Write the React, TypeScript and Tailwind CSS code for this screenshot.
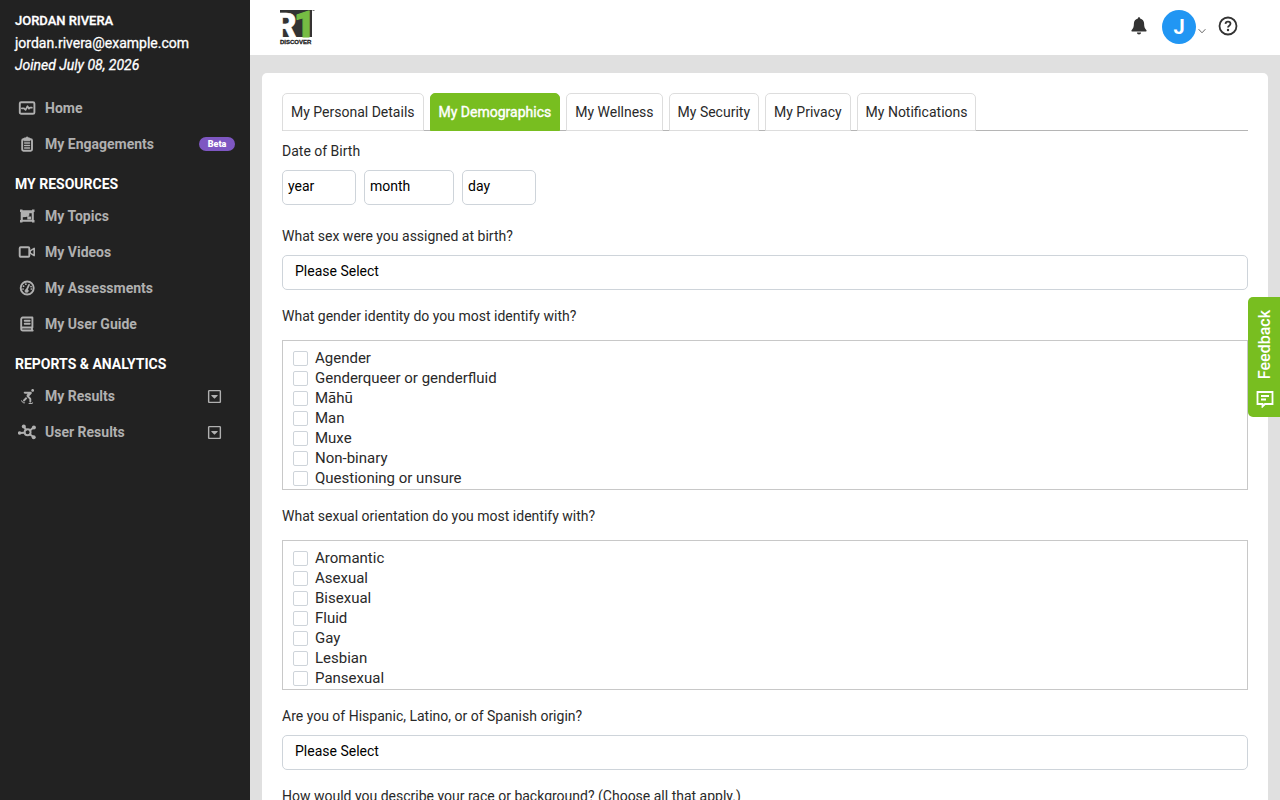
import React from "react";
import type { ReactNode } from "react";
import { FaRegCaretSquareDown, FaSkating } from "react-icons/fa";

type IconProps = { children: ReactNode };

function Icon({ children }: IconProps) {
  return (
    <svg
      viewBox="0 0 18 18"
      className="size-[18px] shrink-0"
      fill="none"
      stroke="currentColor"
      strokeWidth="1.9"
      strokeLinecap="round"
      strokeLinejoin="round"
      aria-hidden="true"
    >
      {children}
    </svg>
  );
}

const icons = {
  home: (
    <Icon>
      <rect x="1.8" y="3.2" width="14.6" height="11.6" rx="1.4" />
      <path d="M3.800 9.300h2.300l1.500 1.500 1.900-3.600 1.500 2.500 1-1h1.900" strokeWidth="1.700" />
    </Icon>
  ),
  clipboard: (
    <Icon>
      <rect x="4.200" y="4.200" width="9.800" height="11.600" rx="1.200" />
      <path d="M6.300 3.100h1.300a1.600 1.600 0 0 1 3 0h1.300v2.700H6.300z" fill="currentColor" strokeWidth="1" />
      <path d="M6.600 8h5M6.600 10.500h5M6.600 13h5" strokeWidth="1.300" />
    </Icon>
  ),
  topics: (
    <Icon>
      <path
        d="M2 2.500h2.500v.7h9.500v-.7h2.500V5h-.7v8h.7v2.500H14v-.7H4.500v.7H2V13h.7V5H2zM11.300 6.200v2.500H8.200v1.200l-3.400.4v2.500h8.900V6.200z"
        fill="currentColor"
        fillRule="evenodd"
        stroke="none"
      />
      <path d="M5.300 5.200h5.200v4.600H5.300zM9.300 9.600h3.800v2.800H9.300z" fill="currentColor" stroke="none" />
    </Icon>
  ),
  video: (
    <Icon>
      <rect x="1.700" y="4.200" width="9.600" height="9.600" rx="1" />
      <path d="M12.200 7.900l4-2.500v7.200l-4-2.500z" strokeWidth="1.600" />
    </Icon>
  ),
  gauge: (
    <Icon>
      <circle cx="9.200" cy="9" r="6.500" />
      <path d="M8.800 10.700l2.200-4.800" strokeWidth="1.800" />
      <circle cx="8.600" cy="11.900" r="1.700" fill="currentColor" strokeWidth=".5" />
      <path d="M7.800 5.200h.1M5.500 7.200h.1M5 10h.1M13 7.600h.1M13.300 10h.1" strokeWidth="1.700" />
    </Icon>
  ),
  book: (
    <Icon>
      <path d="M4.800 2.500h9.600v10H4.700a1.500 1.500 0 0 0 0 3h10M3.200 14V4.300a1.700 1.700 0 0 1 1.600-1.800M14 12.500v3" />
      <path d="M6.700 5.800h5M6.700 8.700h5" />
    </Icon>
  ),
  skater: (
    <span className="flex w-[18px] shrink-0 justify-center">
      <FaSkating className="size-[15px]" aria-hidden="true" />
    </span>
  ),
  network: (
    <Icon>
      <circle cx="9.600" cy="9.300" r="3" />
      <path d="M1.800 10l4.700-.3M6 3.800L8 6.700M15.700 4.200l-3.800 3.200M15.400 14l-3.600-2.700" />
      <circle cx="1.700" cy="10" r="1.800" fill="currentColor" stroke="none" />
      <circle cx="5.800" cy="3.500" r="2" fill="currentColor" stroke="none" />
      <circle cx="15.900" cy="4.500" r="2" fill="currentColor" stroke="none" />
      <circle cx="15.700" cy="14.200" r="2" fill="currentColor" stroke="none" />
    </Icon>
  ),
};

type NavItem = { label: string; icon: ReactNode; badge?: string; expandable?: boolean };
type NavGroup = { title?: string; items: NavItem[] };

const navGroups: NavGroup[] = [
  {
    items: [
      { label: "Home", icon: icons.home },
      { label: "My Engagements", icon: icons.clipboard, badge: "Beta" },
    ],
  },
  {
    title: "MY RESOURCES",
    items: [
      { label: "My Topics", icon: icons.topics },
      { label: "My Videos", icon: icons.video },
      { label: "My Assessments", icon: icons.gauge },
      { label: "My User Guide", icon: icons.book },
    ],
  },
  {
    title: "REPORTS & ANALYTICS",
    items: [
      { label: "My Results", icon: icons.skater, expandable: true },
      { label: "User Results", icon: icons.network, expandable: true },
    ],
  },
];

const tabs = [
  "My Personal Details",
  "My Demographics",
  "My Wellness",
  "My Security",
  "My Privacy",
  "My Notifications",
];

const genders = ["Agender", "Genderqueer or genderfluid", "Māhū", "Man", "Muxe", "Non-binary", "Questioning or unsure"];
const orientations = ["Aromantic", "Asexual", "Bisexual", "Fluid", "Gay", "Lesbian", "Pansexual"];

function Sidebar() {
  return (
    <aside className="w-[250px] shrink-0 bg-[#222222] px-[15px] pt-[10px] text-sm text-white">
      <div className="leading-[22px] [-webkit-text-stroke:0.3px]">
        <p className="text-[13px] font-medium">JORDAN RIVERA</p>
        <p>jordan.rivera@example.com</p>
        <p className="italic">Joined July 08, 2026</p>
      </div>
      <nav className="pt-[14px]">
        {navGroups.map((group, index) => (
          <section key={index}>
            {group.title && <h2 className="pt-[11px] pb-[3px] leading-[22px] font-bold">{group.title}</h2>}
            <ul>
              {group.items.map((item) => (
                <li key={item.label}>
                  <a href="#" className="flex h-9 items-center gap-[9px] pl-[3px] font-bold text-[#b0b0b0]">
                    {item.icon}
                    <span className="grow">{item.label}</span>
                    {item.badge && (
                      <span className="w-9 rounded-full bg-[#7e57c2] text-center text-[9px] leading-[14px] font-black text-white">
                        {item.badge}
                      </span>
                    )}
                    {item.expandable && <FaRegCaretSquareDown className="mr-[13px] size-[15px]" aria-hidden="true" />}
                  </a>
                </li>
              ))}
            </ul>
          </section>
        ))}
      </nav>
    </aside>
  );
}

function Header() {
  return (
    <header className="flex h-[55px] shrink-0 items-center justify-between bg-white pr-[42px] pl-[30px]">
      <a href="#" aria-label="R1 Discover">
        <svg viewBox="0 0 36 37" className="h-[37px] w-9 overflow-visible" aria-hidden="true">
          <path d="M0 1h32v27H0z" fill="#333333" />
          <text x="-5" y="28" fontFamily="Roboto" fontWeight="900" fontSize="33" fill="#ffffff" stroke="#ffffff" strokeWidth=".6">R</text>
          <text x="14" y="28" fontFamily="Roboto" fontWeight="900" fontSize="37" fill="#76bc43" stroke="#76bc43" strokeWidth="1">1</text>
          <path d="M32.500 1.500h2" stroke="#777777" />
          <text x="0" y="35" fontFamily="Liberation Sans" fontWeight="700" fontSize="6" fill="#222222" stroke="#222222" strokeWidth=".3">DISCOVER</text>
        </svg>
      </a>
      <div className="flex items-center pb-[2px]">
        <button type="button" aria-label="Notifications" className="mr-[14px] mb-[2px] text-[#333333]">
          <svg viewBox="0 0 18 18" className="size-[18px]" fill="currentColor" aria-hidden="true">
            <path d="M9 .3c.7 0 1.1.5 1.1 1.2 2.4.5 4 2.5 4 5.1 0 3.4.7 4.9 2.2 6.3.6.6.2 1.7-.7 1.7H2.4c-.9 0-1.3-1.1-.7-1.7C3.200 11.500 3.900 10 3.900 6.600c0-2.600 1.600-4.600 4-5.100C7.900.8 8.300.3 9 .3zM6.900 15.400h4.200a2.100 2.100 0 0 1-4.200 0z" />
          </svg>
        </button>
        <button type="button" className="flex items-center gap-[2px]" aria-label="Account menu">
          <span className="flex size-[34px] items-center justify-center rounded-full bg-[#2196f3] text-xl font-bold text-white">J</span>
          <svg viewBox="0 0 8 8" className="mt-[9px] size-2" fill="none" stroke="#666666" aria-hidden="true">
            <path d="M.6 2.200L4 5.800 7.400 2.200" />
          </svg>
        </button>
        <button type="button" aria-label="Help" className="mb-[2px] ml-3 text-[#333333]">
          <svg viewBox="0 0 20 20" className="size-5" fill="none" stroke="currentColor" strokeWidth="1.8" aria-hidden="true">
            <circle cx="10" cy="10" r="8.500" />
            <path d="M7.500 7.900c.1-1.300 1.100-2.200 2.500-2.200s2.500.9 2.500 2.100c0 1.900-2.500 1.800-2.500 3.600" />
            <circle cx="10" cy="14" r="1.200" fill="currentColor" stroke="none" />
          </svg>
        </button>
      </div>
    </header>
  );
}

function SelectField({ id, label }: { id: string; label: string }) {
  return (
    <div className="mb-[15px]">
      <label htmlFor={id} className="mb-2 block leading-[22px]">{label}</label>
      <select
        id={id}
        className="block h-[35px] w-full appearance-none rounded-[5px] border border-[#ced4da] bg-white px-3 pb-[3px] text-black"
      >
        <option>Please Select</option>
      </select>
    </div>
  );
}

function CheckList({ label, options }: { label: string; options: string[] }) {
  return (
    <fieldset className="mb-[15px]">
      <legend className="mb-[13px] leading-[22px]">{label}</legend>
      <div className="h-[150px] overflow-hidden border border-[#c8c8c8] px-[10px] pt-[7px] text-[15px] leading-5">
        {options.map((option) => (
          <label key={option} className="flex items-center gap-[7px]">
            <input
              type="checkbox"
              className="mt-px size-[15px] appearance-none rounded-[2px] border border-[#ced4da] bg-white checked:bg-[#78be20]"
            />
            {option}
          </label>
        ))}
      </div>
    </fieldset>
  );
}

const dateParts = [
  { label: "year", width: "w-[74px]" },
  { label: "month", width: "w-[90px]" },
  { label: "day", width: "w-[74px]" },
];

export default function App() {
  return (
    <div className="flex h-screen overflow-hidden bg-[#e0e0e0] font-[Roboto,'Liberation_Sans',sans-serif] text-sm text-[#292929]">
      <Sidebar />
      <div className="flex min-w-0 grow flex-col">
        <Header />
        <main className="min-h-0 grow overflow-hidden px-3 pt-[18px]">
          <div className="rounded-[5px] bg-white px-5 pt-5">
            <div role="tablist" className="mb-[9px] flex gap-[6px] border-b border-[#b5b5b5]">
              {tabs.map((tab) => {
                const active = tab === "My Demographics";
                return (
                  <button
                    key={tab}
                    type="button"
                    role="tab"
                    aria-selected={active}
                    className={
                      active
                        ? "-mb-px h-[38px] rounded-t-[5px] border border-[#78be20] bg-[#78be20] px-2 text-white [-webkit-text-stroke:0.4px]"
                        : "-mb-px h-[38px] rounded-t-[5px] border border-[#dddddd] bg-white px-2"
                    }
                  >
                    {tab}
                  </button>
                );
              })}
            </div>
            <form>
              <fieldset className="mb-5">
                <legend className="mb-2 leading-[22px]">Date of Birth</legend>
                <div className="flex gap-2">
                  {dateParts.map((part) => (
                    <select
                      key={part.label}
                      aria-label={part.label}
                      className={`${part.width} h-[35px] appearance-none rounded-[5px] border border-[#ced4da] bg-white px-[5px] pb-[3px] text-black`}
                    >
                      <option>{part.label}</option>
                    </select>
                  ))}
                </div>
              </fieldset>
              <SelectField id="birth-sex" label="What sex were you assigned at birth?" />
              <CheckList label="What gender identity do you most identify with?" options={genders} />
              <CheckList label="What sexual orientation do you most identify with?" options={orientations} />
              <SelectField id="origin" label="Are you of Hispanic, Latino, or of Spanish origin?" />
              <p className="leading-[22px]">How would you describe your race or background? (Choose all that apply.)</p>
            </form>
          </div>
        </main>
      </div>
      <button
        type="button"
        className="fixed top-[297px] right-0 flex h-[120px] w-8 flex-col items-center justify-center gap-[10px] rounded-l-[5px] bg-[#78be20] pt-1 pl-[2px] text-base text-white"
      >
        <span className="rotate-180 font-medium [writing-mode:vertical-rl]">Feedback</span>
        <svg viewBox="0 0 18 18" className="size-[18px]" fill="none" stroke="currentColor" strokeWidth="1.800" aria-hidden="true">
          <path d="M1.500 2h15v12H9l-2.500 2.500V14h-5zM5 6h8M5 9.500h5" />
        </svg>
      </button>
    </div>
  );
}
